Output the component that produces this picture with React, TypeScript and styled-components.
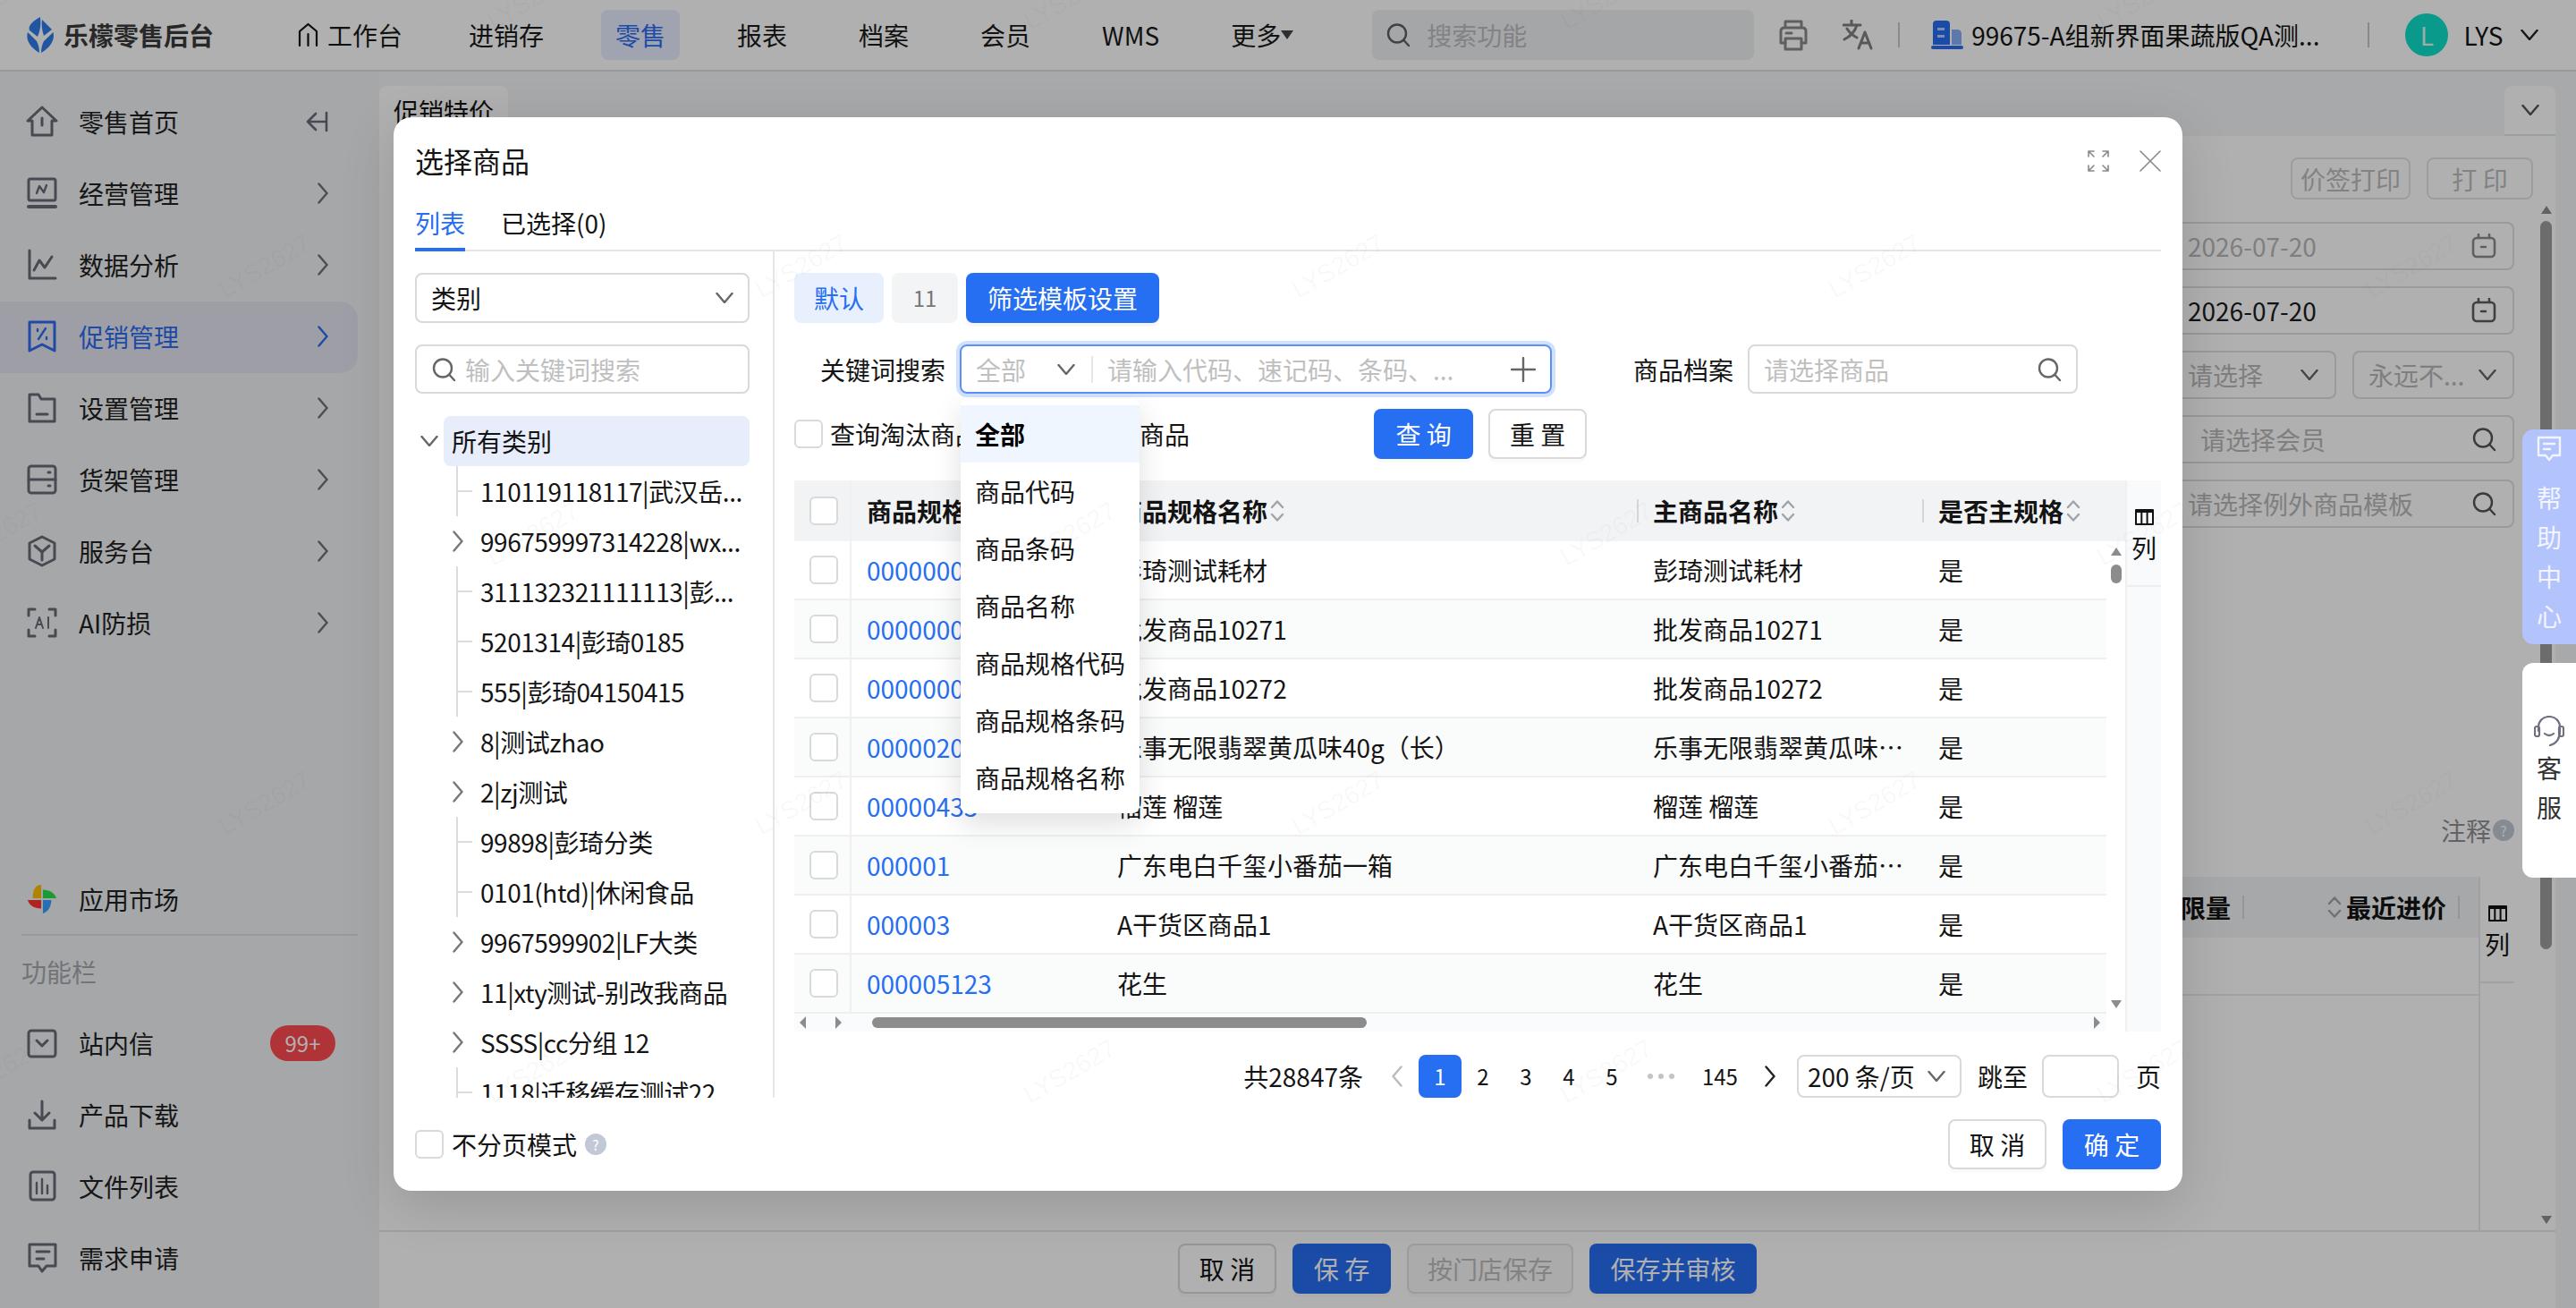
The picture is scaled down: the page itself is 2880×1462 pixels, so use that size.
import React from "react";
import styled, { createGlobalStyle, css } from "styled-components";

const FONT = `"Noto Sans CJK SC", "Noto Sans", sans-serif`;
const BLUE = "#266ef2";

const Global = createGlobalStyle`
  html, body { margin: 0; padding: 0; height: 100%; overflow: hidden; }
  body { font-family: ${FONT}; font-size: 28px; line-height: 40px; color: #141414; background: #fff; }
  * { box-sizing: border-box; }
`;

/* ---------- icons ---------- */
const Svg = styled.svg<{ $c?: string; $sw?: number }>`
  display: block;
  flex: none;
  fill: none;
  stroke: ${(p) => p.$c || "currentColor"};
  stroke-width: ${(p) => p.$sw || 3};
  stroke-linecap: round;
  stroke-linejoin: round;
`;
const ChevR = ({ c = "#666", w = 12, h = 24, sw = 2.4 }: { c?: string; w?: number; h?: number; sw?: number }) => (
  <Svg $c={c} $sw={sw} width={w} height={h} viewBox="0 0 12 24"><path d="M1.5 1.5 L10.5 12 L1.5 22.5" /></Svg>
);
const ChevL = ({ c = "#bbb" }: { c?: string }) => (
  <Svg $c={c} $sw={2.4} width={12} height={24} viewBox="0 0 12 24"><path d="M10.5 1.5 L1.5 12 L10.5 22.5" /></Svg>
);
const ChevD = ({ c = "#666" }: { c?: string }) => (
  <Svg $c={c} $sw={2.4} width={20} height={12} viewBox="0 0 20 12"><path d="M1.5 1 L10 11 L18.5 1" /></Svg>
);
const SearchIc = ({ c = "#666", s = 28 }: { c?: string; s?: number }) => (
  <Svg $c={c} $sw={2.4} width={s} height={s} viewBox="0 0 28 28"><circle cx="13" cy="12.5" r="10" /><path d="M20.5 20 L26 26" /></Svg>
);
const CalIc = ({ c = "#5c5d62" }: { c?: string }) => (
  <Svg $c={c} $sw={2.6} width={28} height={28} viewBox="0 0 28 28">
    <rect x="2" y="5" width="24" height="21" rx="4" /><path d="M8 1 V5 M20 1 V5 M11 15 H16" />
  </Svg>
);
const ColIc = () => (
  <Svg $c="#111" $sw={2} width={21} height={18} viewBox="0 0 21 18">
    <path d="M1 1 H20 V17 H1 Z M7.3 1 V17 M13.6 1 V17" /><path d="M1 2.5 H20" strokeWidth={3} />
  </Svg>
);
const Sort = () => (
  <Svg $c="#9fa3ab" $sw={2.4} width={18} height={26} viewBox="0 0 18 26"><path d="M3 9 L9 2.5 L15 9 M3 17 L9 23.5 L15 17" /></Svg>
);
const ico: Record<string, React.ReactNode> = {
  home: <path d="M18 2 L34 17 H29 V33 H7 V17 H2 Z M18 14 V22" />,
  biz: <><rect x="3" y="2" width="30" height="24" rx="2" /><path d="M3 33 H33" strokeWidth={4} /><path d="M12 18 L15 10 L20 17 L23 9" strokeWidth={2.4} /></>,
  data: <path d="M4 2 V33 H33 M9 24 L15 13 L21 21 L29 9" />,
  promo: <><path d="M4 2 H32 V34 L18 27 L4 34 Z" /><path d="M22 9 L14 21 M13 10 V12 M23 19 V21" strokeWidth={2.4} /></>,
  folder: <path d="M4 3 H14 L17 8 H32 V33 H4 Z M12 25 H24" />,
  shelf: <><rect x="3" y="3" width="30" height="30" rx="3" /><path d="M3 18 H33 M25 10 H27 M25 25 H27" /></>,
  serv: <path d="M18 2 L32 9 V27 L18 34 L4 27 V9 Z M10 12 L18 19 L26 12 M18 19 V28" />,
  ai: <><path d="M10 3 H3 V10 M26 3 H33 V10 M10 33 H3 V26 M26 33 H33 V26" /><path d="M11 24 L15 12 L19 24 M12.5 20 H17.5 M25 12 V24" strokeWidth={2} /></>,
  mail: <><rect x="3" y="4" width="30" height="29" rx="3" /><path d="M12 15 L18 21 L24 15" /></>,
  down: <path d="M18 3 V23 M10 16 L18 24 L26 16 M4 24 V33 H32 V24" />,
  file: <><rect x="5" y="2" width="27" height="31" rx="3" /><path d="M12 14 V26 M18 10 V26 M24 17 V26" strokeWidth={2.4} /></>,
  req: <path d="M4 3 H33 V27 H23 L18 33 L14 27 H4 Z M12 11 H26 M12 19 H20" />,
};
const SideIc = ({ n, c }: { n: string; c?: string }) => (
  <Svg $c={c || "#696b76"} width={36} height={36} viewBox="0 0 36 36">{ico[n]}</Svg>
);

/* ---------- top bar ---------- */
const Page = styled.div`
  position: relative;
  width: 2880px;
  height: 1462px;
  overflow: hidden;
  display: flex;
  flex-direction: column;
`;
const TopBar = styled.header`
  flex: none;
  height: 80px;
  border-bottom: 2px solid #dcdee1;
  background: #fff;
  display: flex;
  align-items: center;
  padding-left: 28px;
`;
const LogoText = styled.div`
  font-size: 28px;
  font-weight: 700;
  color: #3a3a3c;
  white-space: nowrap;
  margin-left: -1px;
`;
const Nav = styled.nav`
  display: flex;
  gap: 48px;
  margin-left: 78px;
`;
const NavItem = styled.div<{ $on?: boolean; $tight?: boolean }>`
  height: 56px;
  padding: 0 16px;
  border-radius: 8px;
  display: flex;
  align-items: center;
  white-space: nowrap;
  color: ${(p) => (p.$on ? "#2d6cf0" : "#1a1a1a")};
  background: ${(p) => (p.$on ? "#e8ecff" : "transparent")};
  ${(p) => p.$tight && css`margin-right: -6px; gap: 10px;`}
`;
const Tri = styled.i<{ $dir: "up" | "down" | "left" | "right"; $size?: number; $c?: string }>`
  display: block;
  flex: none;
  width: 0;
  height: 0;
  ${(p) => {
    const s = p.$size || 6;
    const c = p.$c || "#444";
    if (p.$dir === "up") return css`border-left: ${s}px solid transparent; border-right: ${s}px solid transparent; border-bottom: ${s * 1.5}px solid ${c};`;
    if (p.$dir === "down") return css`border-left: ${s}px solid transparent; border-right: ${s}px solid transparent; border-top: ${s * 1.5}px solid ${c};`;
    if (p.$dir === "left") return css`border-top: ${s}px solid transparent; border-bottom: ${s}px solid transparent; border-right: ${s}px solid ${c};`;
    return css`border-top: ${s}px solid transparent; border-bottom: ${s}px solid transparent; border-left: ${s}px solid ${c};`;
  }}
`;
const Spaced = styled.div<{ $ml: number }>`
  margin-left: ${(p) => p.$ml}px;
  flex: none;
  display: flex;
  align-items: center;
  white-space: nowrap;
`;
const TopSearch = styled(Spaced)`
  width: 427px;
  height: 56px;
  border-radius: 8px;
  background: #f0f1f3;
  padding-left: 15px;
  gap: 18px;
  color: #bcbec2;
`;
const VLine = styled(Spaced)`
  width: 2px;
  height: 28px;
  background: #c8c8c8;
`;
const Avatar = styled(Spaced)`
  width: 48px;
  height: 48px;
  border-radius: 50%;
  background: #0fdfca;
  color: #e6f6f4;
  justify-content: center;
`;

/* ---------- side bar ---------- */
const Body = styled.div`
  flex: 1;
  min-height: 0;
  display: flex;
`;
const Side = styled.aside`
  flex: none;
  width: 424px;
  background: #f1f2f5;
  display: flex;
  flex-direction: column;
  padding: 17px 0 15px;
`;
const SideItem = styled.div<{ $on?: boolean }>`
  height: 80px;
  width: 400px;
  padding: 0 33px 3px 29px;
  display: flex;
  align-items: center;
  gap: 23px;
  border-radius: 0 20px 20px 0;
  flex: none;
  color: ${(p) => (p.$on ? "#2d6cf0" : "#222")};
  background: ${(p) => (p.$on ? "#e5e7f1" : "transparent")};
`;
const SideText = styled.span`
  flex: 1;
  white-space: nowrap;
`;
const SideBottom = styled.div`
  margin-top: auto;
`;
const SideRule = styled.div`
  height: 2px;
  margin: -2px 24px 0;
  background: #dcdee2;
`;
const SideLabel = styled.div`
  height: 81px;
  padding: 20px 24px 0;
  color: #a6a9b0;
`;
const Badge = styled.span`
  width: 73px;
  height: 40px;
  margin-right: -8px;
  border-radius: 20px;
  background: #ff4a50;
  color: #fff;
  font-size: 24px;
  display: flex;
  align-items: center;
  justify-content: center;
`;

/* ---------- page behind the dialog ---------- */
const Main = styled.main`
  flex: 1;
  min-width: 0;
  display: flex;
  flex-direction: column;
  background: #f4f5f7;
`;
const PageTabs = styled.div`
  flex: none;
  height: 72px;
  padding: 16px 23px 0 0;
  display: flex;
  justify-content: space-between;
`;
const PageTab = styled.div`
  width: 144px;
  height: 56px;
  padding-left: 16px;
  border-radius: 8px 8px 0 0;
  background: #fff;
  white-space: nowrap;
  display: flex;
  align-items: center;
`;
const PageTabMore = styled(PageTab)`
  width: 57px;
  padding: 0;
  justify-content: center;
  border-bottom: 2px solid #e4e5e8;
`;
const Card = styled.div`
  flex: 1;
  min-height: 0;
  margin-right: 23px;
  background: #fff;
  display: flex;
  flex-direction: column;
`;
const CardBody = styled.div`
  flex: 1;
  min-height: 0;
  display: flex;
  justify-content: flex-end;
`;
const CardInner = styled.div`
  flex: none;
  width: 440px;
  margin-right: 29px;
  display: flex;
  flex-direction: column;
  align-items: stretch;
`;
const TopActions = styled.div`
  margin: 24px -21px 25px 0;
  display: flex;
  justify-content: flex-end;
  gap: 18px;
`;
const GhostBtn = styled.div<{ $w: number }>`
  width: ${(p) => p.$w}px;
  height: 47px;
  border: 2px solid #e4e4e6;
  border-radius: 8px;
  color: #bdbdbd;
  display: flex;
  align-items: center;
  justify-content: center;
  white-space: nowrap;
`;
const BgForm = styled.div`
  display: flex;
  flex-direction: column;
  gap: 18px;
`;
const BgField = styled.div<{ $w?: number; $dark?: boolean; $pl?: number }>`
  ${(p) => (p.$w ? css`width: ${p.$w}px;` : "")}
  flex: none;
  height: 54px;
  padding: 0 18px 0 ${(p) => p.$pl || 73}px;
  border: 2px solid #dfe0e2;
  border-radius: 8px;
  display: flex;
  align-items: center;
  justify-content: space-between;
  white-space: nowrap;
  overflow: hidden;
  color: ${(p) => (p.$dark ? "#1c1c1c" : "#b9b9b9")};
`;
const BgSelectRow = styled.div`
  display: flex;
  justify-content: flex-end;
  gap: 18px;
`;
const BgNoteRow = styled.div`
  margin-top: auto;
  height: 68px;
  padding-bottom: 36px;
  display: flex;
  justify-content: flex-end;
  align-items: center;
  gap: 2px;
  color: #8d9096;
`;
const Help = styled.span<{ $s: number }>`
  width: ${(p) => p.$s}px;
  height: ${(p) => p.$s}px;
  flex: none;
  border-radius: 50%;
  background: #c2c8d6;
  color: #fff;
  font-size: ${(p) => p.$s * 0.65}px;
  line-height: ${(p) => p.$s}px;
  text-align: center;
`;
const BgTable = styled.div`
  height: 395px;
  flex: none;
  display: flex;
`;
const BgGrid = styled.div`
  flex: 1;
`;
const BgHead = styled.div`
  height: 68px;
  background: #f2f3f5;
  display: grid;
  grid-template-columns: 138px 241px 21px;
  font-weight: 600;
`;
const BgHeadCell = styled.div`
  display: flex;
  align-items: center;
  justify-content: flex-end;
  padding-right: 15px;
  gap: 4px;
  position: relative;
  white-space: nowrap;
  &::after {
    content: "";
    position: absolute;
    right: 0;
    top: 21px;
    width: 2px;
    height: 26px;
    background: #d8dade;
  }
`;
const BgRow = styled.div`
  height: 65px;
  border-bottom: 2px solid #e8e9eb;
`;
const ColSetting = styled.div<{ $w: number }>`
  flex: none;
  width: ${(p) => p.$w}px;
  border-left: 2px solid #e8e9eb;
  background: #fff;
`;
const ColBtn = styled.div`
  height: 119px;
  padding-top: 32px;
  border-bottom: 2px solid #e8e9eb;
  display: flex;
  flex-direction: column;
  align-items: center;
  gap: 8px;
  line-height: 34px;
`;
const BgScroll = styled.div`
  flex: none;
  width: 13px;
  margin-right: 4px;
  padding: 78px 0 7px;
  display: flex;
  flex-direction: column;
  align-items: center;
  gap: 8px;
`;
const BgThumb = styled.div`
  flex: none;
  width: 13px;
  height: 814px;
  border-radius: 7px;
  background: #9d9d9d;
`;
const BgScrollGap = styled.div`
  flex: 1;
`;
const CardFooter = styled.div`
  flex: none;
  height: 87px;
  padding-top: 13px;
  border-top: 2px solid #e6e7e9;
  display: flex;
  justify-content: center;
  gap: 18px;
`;
const Btn = styled.div<{ $w: number; $kind?: "primary" | "default" | "ghost"; $h?: number; $ml?: number }>`
  flex: none;
  width: ${(p) => p.$w}px;
  height: ${(p) => p.$h || 56}px;
  ${(p) => p.$ml && css`margin-left: ${p.$ml}px;`}
  border-radius: 8px;
  display: flex;
  align-items: center;
  justify-content: center;
  white-space: pre;
  box-shadow: 0 4px 0 rgba(0, 0, 0, 0.02);
  ${(p) =>
    p.$kind === "primary"
      ? css`background: ${BLUE}; color: #fff;`
      : p.$kind === "ghost"
      ? css`border: 2px solid #e2e3e5; color: #bdbdbd; background: #f8f8f8;`
      : css`border: 2px solid #d9d9d9; color: #141414; background: #fff;`}
`;

/* ---------- overlays ---------- */
const Mask = styled.div`
  position: absolute;
  inset: 0;
  z-index: 10;
  background: rgba(0, 0, 0, 0.31);
`;
const FloatTab = styled.div<{ $top: number; $h: number; $help?: boolean }>`
  position: absolute;
  z-index: 30;
  right: 0;
  top: ${(p) => p.$top}px;
  width: 60px;
  height: ${(p) => p.$h}px;
  border-radius: 12px 0 0 12px;
  background: ${(p) => (p.$help ? "#b3c3fb" : "#fff")};
  color: ${(p) => (p.$help ? "#f2f4ff" : "#333")};
  display: flex;
  flex-direction: column;
  align-items: center;
  justify-content: ${(p) => (p.$help ? "flex-start" : "center")};
  padding-top: ${(p) => (p.$help ? 7 : 0)}px;
  gap: 4px;
`;
const FloatIcon = styled.div<{ $mb: number }>`
  margin-bottom: ${(p) => p.$mb}px;
`;
const Wm = styled.span`
  position: absolute;
  z-index: 40;
  pointer-events: none;
  transform: translate(-50%, -50%) rotate(-30deg);
  font-family: "Liberation Sans", sans-serif;
  font-size: 28px;
  color: rgba(60, 60, 60, 0.04);
  white-space: nowrap;
`;

/* ---------- dialog ---------- */
const Modal = styled.section`
  position: absolute;
  z-index: 20;
  left: 440px;
  top: 131px;
  width: 2000px;
  height: 1200px;
  padding: 0 24px 24px;
  background: #fff;
  border-radius: 20px;
  box-shadow: 0 16px 60px rgba(0, 0, 0, 0.14);
  display: flex;
  flex-direction: column;
`;
const ModalHead = styled.div`
  flex: none;
  height: 90px;
  padding-top: 6px;
  display: flex;
  align-items: center;
  justify-content: space-between;
`;
const ModalTitle = styled.h2`
  margin: 0;
  font-size: 32px;
  font-weight: 400;
`;
const ModalTools = styled.div`
  display: flex;
  gap: 34px;
  margin-top: 2px;
`;
const Tabs = styled.div`
  flex: none;
  height: 60px;
  padding-top: 8px;
  border-bottom: 2px solid #e6e6e6;
  display: flex;
  gap: 40px;
`;
const Tab = styled.div<{ $on?: boolean }>`
  height: 52px;
  white-space: nowrap;
  ${(p) => p.$on && css`color: ${BLUE}; border-bottom: 4px solid ${BLUE};`}
`;
const ModalMain = styled.div`
  flex: 1;
  min-height: 0;
  display: flex;
  margin-bottom: 24px;
`;
const LeftPanel = styled.div`
  flex: none;
  width: 402px;
  padding: 24px 26px 0 0;
  border-right: 2px solid #e6e6e6;
  display: flex;
  flex-direction: column;
`;
const Field = styled.div<{ $h?: number; $w?: number; $ml?: number; $mt?: number; $start?: boolean }>`
  flex: none;
  height: ${(p) => p.$h || 56}px;
  ${(p) => p.$w && css`width: ${p.$w}px;`}
  ${(p) => p.$ml && css`margin-left: ${p.$ml}px;`}
  ${(p) => p.$mt && css`margin-top: ${p.$mt}px;`}
  padding: 0 16px;
  border: 2px solid #d9d9d9;
  border-radius: 8px;
  background: #fff;
  display: flex;
  align-items: center;
  justify-content: ${(p) => (p.$start ? "flex-start" : "space-between")};
  gap: ${(p) => (p.$start ? 10 : 0)}px;
  white-space: nowrap;
`;
const Placeholder = styled.span`
  color: #bfbfbf;
`;
const TreeBox = styled.div`
  margin-top: 25px;
  flex: 1;
  min-height: 0;
  overflow: hidden;
`;
const TreeRow = styled.div<{ $leaf?: boolean }>`
  position: relative;
  height: 56px;
  padding-left: 73px;
  display: flex;
  align-items: center;
  white-space: nowrap;
  letter-spacing: -0.45px;
  ${(p) =>
    p.$leaf &&
    css`
      &::before {
        content: "";
        position: absolute;
        left: 46px;
        top: 0;
        bottom: 0;
        width: 2px;
        background: #dcdcdc;
      }
      &::after {
        content: "";
        position: absolute;
        left: 47px;
        top: 27px;
        width: 17px;
        height: 2px;
        background: #dcdcdc;
      }
    `}
`;
const TreeArrow = styled.span`
  position: absolute;
  left: 42px;
  top: 16px;
`;
const TreeRoot = styled.div`
  height: 56px;
  display: flex;
  align-items: center;
  padding-left: 6px;
`;
const TreeRootLabel = styled.div`
  flex: 1;
  height: 56px;
  margin-left: 6px;
  padding-left: 9px;
  border-radius: 8px;
  background: #e8edfb;
  display: flex;
  align-items: center;
`;
const RightPanel = styled.div`
  flex: 1;
  min-width: 0;
  padding: 24px 0 0 22px;
  display: flex;
  flex-direction: column;
`;
const TemplateRow = styled.div`
  display: flex;
  gap: 9px;
  height: 56px;
`;
const Chip = styled.div<{ $w: number; $kind: "on" | "off" | "solid" }>`
  width: ${(p) => p.$w}px;
  border-radius: 8px;
  display: flex;
  align-items: center;
  justify-content: center;
  white-space: nowrap;
  ${(p) =>
    p.$kind === "on"
      ? css`background: #e8f0fe; color: ${BLUE};`
      : p.$kind === "off"
      ? css`background: #f3f4f6; color: #777; font-size: 24px;`
      : css`background: ${BLUE}; color: #fff; box-shadow: 0 4px 0 rgba(0, 0, 0, 0.03);`}
`;
const SearchRow = styled.div`
  margin-top: 24px;
  height: 55px;
  display: flex;
  align-items: center;
  padding-left: 29px;
`;
const Label = styled.span<{ $ml?: number }>`
  flex: none;
  white-space: nowrap;
  ${(p) => p.$ml && css`margin-left: ${p.$ml}px;`}
`;
const Keyword = styled.div`
  position: relative;
  flex: none;
  width: 662px;
  height: 55px;
  margin-left: 16px;
  border: 2px solid #5b90f6;
  border-radius: 8px;
  box-shadow: 0 0 0 4px #d2e1fc;
  display: flex;
  align-items: center;
  white-space: nowrap;
`;
const KeywordScope = styled.div`
  flex: none;
  width: 147px;
  height: 30px;
  padding: 0 18px 0 16px;
  border-right: 2px solid #e6e6e6;
  display: flex;
  align-items: center;
  justify-content: space-between;
`;
const KeywordText = styled(Placeholder)`
  flex: 1;
  padding-left: 16px;
`;
const PlusWrap = styled.div`
  margin-right: 16px;
`;
const Drop = styled.div`
  position: absolute;
  z-index: 5;
  left: -1px;
  top: 59px;
  width: 200px;
  height: 463px;
  padding: 7px 0 8px;
  background: #fff;
  border-radius: 8px;
  box-shadow: 0 12px 32px rgba(0, 0, 0, 0.13);
`;
const DropItem = styled.div<{ $on?: boolean }>`
  height: 64px;
  padding-left: 16px;
  display: flex;
  align-items: center;
  ${(p) => p.$on && css`background: #f0f6ff; font-weight: 700; color: #000;`}
`;
const ActionRow = styled.div`
  margin-top: 17px;
  height: 56px;
  display: flex;
  align-items: center;
`;
const Check = styled.i<{ $ml?: number }>`
  display: block;
  flex: none;
  width: 32px;
  height: 32px;
  border: 2px solid #d9d9d9;
  border-radius: 6px;
  background: #fff;
  ${(p) => p.$ml && css`margin-left: ${p.$ml}px;`}
`;
const TableWrap = styled.div`
  margin-top: 24px;
  height: 616px;
  display: flex;
`;
const TableLeft = styled.div`
  flex: none;
  width: 1488px;
  display: flex;
  flex-direction: column;
`;
const THead = styled.div`
  flex: none;
  height: 68px;
  background: #f2f3f5;
  display: grid;
  grid-template-columns: 64px 280px 599px 319px 226px;
  font-weight: 600;
`;
const Th = styled.div<{ $sep?: boolean }>`
  position: relative;
  padding-left: 17px;
  display: flex;
  align-items: center;
  gap: 2px;
  white-space: nowrap;
  ${(p) =>
    p.$sep &&
    css`
      &::before {
        content: "";
        position: absolute;
        left: -1px;
        top: 21px;
        width: 2px;
        height: 26px;
        background: #d4d6db;
      }
    `}
`;
const CheckCell = styled.div`
  padding-left: 17px;
  display: flex;
  align-items: center;
  border-right: 2px solid #f0f0f0;
`;
const TMiddle = styled.div`
  flex: none;
  height: 528px;
  display: flex;
`;
const TRows = styled.div`
  flex: none;
  width: 1467px;
`;
const TRow = styled.div<{ $alt: boolean }>`
  height: 66px;
  display: grid;
  grid-template-columns: 64px 280px 599px 319px 205px;
  border-bottom: 2px solid #efefef;
  background: ${(p) => (p.$alt ? "#fafbfb" : "#fff")};
`;
const Td = styled.div<{ $link?: boolean }>`
  padding-left: 17px;
  display: flex;
  align-items: center;
  white-space: nowrap;
  min-width: 0;
  ${(p) => p.$link && css`color: ${BLUE};`}
`;
const Clip = styled.span`
  display: block;
  width: 290px;
  overflow: hidden;
  text-overflow: ellipsis;
`;
const VScroll = styled.div`
  flex: 1;
  display: flex;
  flex-direction: column;
  align-items: center;
  padding: 7px 0 6px;
  background: #fff;
`;
const VThumb = styled.div`
  width: 12px;
  height: 21px;
  margin-top: 10px;
  margin-bottom: auto;
  border-radius: 6px;
  background: #8c8c8c;
`;
const HScroll = styled.div`
  flex: none;
  height: 20px;
  width: 1467px;
  background: #fafbfc;
  display: flex;
  align-items: center;
  padding: 0 7px 0 6px;
`;
const HArrowGap = styled.div`
  width: 33px;
`;
const HThumb = styled.div`
  width: 553px;
  height: 12px;
  margin-left: 34px;
  margin-right: auto;
  border-radius: 6px;
  background: #8c8c8c;
`;
const ColSide = styled.div`
  flex: none;
  width: 40px;
  border-left: 2px solid #eff0f2;
  background: #f9fafc;
`;
const ColSideBtn = styled.div`
  height: 119px;
  padding-top: 32px;
  border-bottom: 2px solid #eeeeee;
  display: flex;
  flex-direction: column;
  align-items: center;
  gap: 8px;
  line-height: 34px;
`;
const Pager = styled.div`
  margin-top: 26px;
  height: 48px;
  display: flex;
  align-items: center;
  justify-content: flex-end;
  white-space: nowrap;
`;
const PagerTotal = styled.span`
  margin-right: 14px;
`;
const PageNo = styled.div<{ $on?: boolean; $w?: number; $ml?: number }>`
  flex: none;
  width: ${(p) => p.$w || 48}px;
  height: 48px;
  ${(p) => p.$ml && css`margin-left: ${p.$ml}px;`}
  border-radius: 8px;
  display: flex;
  align-items: center;
  justify-content: center;
  gap: 6px;
  font-size: 24px;
  ${(p) => p.$on && css`background: ${BLUE}; color: #fff;`}
`;
const Dot = styled.i`
  display: block;
  width: 6px;
  height: 6px;
  border-radius: 50%;
  background: #c4c4c4;
`;
const PagerField = styled.div<{ $w: number; $ml: number }>`
  flex: none;
  width: ${(p) => p.$w}px;
  height: 48px;
  margin-left: ${(p) => p.$ml}px;
  padding: 0 16px 0 10px;
  border: 2px solid #d9d9d9;
  border-radius: 8px;
  display: flex;
  align-items: center;
  justify-content: space-between;
`;
const ModalFoot = styled.div`
  flex: none;
  height: 56px;
  display: flex;
  align-items: center;
  gap: 9px;
`;
const FootSpace = styled.div`
  flex: 1;
`;

/* ---------- data ---------- */
const TREE: [string, boolean][] = [
  ["110119118117|武汉岳...", true],
  ["996759997314228|wx...", false],
  ["311132321111113|彭...", true],
  ["5201314|彭琦0185", true],
  ["555|彭琦04150415", true],
  ["8|测试zhao", false],
  ["2|zj测试", false],
  ["99898|彭琦分类", true],
  ["0101(htd)|休闲食品", true],
  ["9967599902|LF大类", false],
  ["11|xty测试-别改我商品", false],
  ["SSSS|cc分组 12", false],
  ["1118|迁移缓存测试22", true],
];
const ROWS = [
  ["00000001", "彭琦测试耗材", "彭琦测试耗材"],
  ["00000002", "批发商品10271", "批发商品10271"],
  ["00000003", "批发商品10272", "批发商品10272"],
  ["00000200", "乐事无限翡翠黄瓜味40g（长）", "乐事无限翡翠黄瓜味40g（长）"],
  ["00000433", "榴莲 榴莲", "榴莲 榴莲"],
  ["000001", "广东电白千玺小番茄一箱", "广东电白千玺小番茄一箱"],
  ["000003", "A干货区商品1", "A干货区商品1"],
  ["000005123", "花生", "花生"],
];
const SIDE_TOP: [string, string][] = [
  ["biz", "经营管理"],
  ["data", "数据分析"],
  ["promo", "促销管理"],
  ["folder", "设置管理"],
  ["shelf", "货架管理"],
  ["serv", "服务台"],
  ["ai", "AI防损"],
];
const SIDE_BOTTOM: [string, string][] = [
  ["down", "产品下载"],
  ["file", "文件列表"],
  ["req", "需求申请"],
];
const DROP = ["全部", "商品代码", "商品条码", "商品名称", "商品规格代码", "商品规格条码", "商品规格名称"];
const NAV = ["进销存", "零售", "报表", "档案", "会员", "WMS"];
const marks: { x: number; y: number }[] = [];
[-2, 298, 597, 898, 1198].forEach((y, r) => {
  for (let k = -1; k < 6; k++) marks.push({ x: (r % 2 ? 296 : 596) + 600 * k, y });
});

const LogoSvg = styled(Svg)`
  stroke: none;
  fill: #2f7dea;
`;
const PlainSvg = styled(Svg)`
  stroke: none;
`;
const BuildingSvg = styled(Svg)`
  stroke: none;
  fill: ${BLUE};
`;

export default function App() {
  return (
    <Page lang="zh-CN">
      <Global />
      <TopBar>
        <LogoSvg width={44} height={44} viewBox="8 8 44 44">
          <path d="M25 10 C15 15 11 21 13 25 L22 32 C25 25 26 18 25 10 Z" />
          <path d="M27 13 L38 24 L29 31 C27 25 26 19 27 13 Z" />
          <path d="M11 27 L21 37 C23 41 24 45 24 50 C15 45 8 36 11 27 Z" />
          <path d="M39.5 27 C42 36 35 45 26 50 C26 45 27 41 29 37 Z" />
        </LogoSvg>
        <LogoText>乐檬零售后台</LogoText>
        <Nav>
          <NavItem $tight>
            <Svg $c="#111" $sw={2.2} width={23} height={28} viewBox="0 0 23 28"><path d="M2 26 V10 L11.5 2 L21 10 V26 M11.5 13 V26" /></Svg>
            工作台
          </NavItem>
          {NAV.map((n) => (
            <NavItem key={n} $on={n === "零售"}>{n}</NavItem>
          ))}
          <NavItem>
            更多<Tri $dir="down" $size={7} $c="#444" />
          </NavItem>
        </Nav>
        <TopSearch $ml={72}>
          <SearchIc c="#5d5f63" />
          搜索功能
        </TopSearch>
        <Spaced $ml={26}>
          <Svg $c="#8a8a8a" $sw={3} width={36} height={36} viewBox="0 0 36 36">
            <path d="M9 10 V3 H27 V10 M9 27 H4 V14 Q4 10 8 10 H28 Q32 10 32 14 V27 H27 M10 16 H16" />
            <rect x="9" y="22" width="18" height="12" />
          </Svg>
        </Spaced>
        <Spaced $ml={37}>
          <Svg $c="#808080" $sw={3} width={36} height={34} viewBox="0 0 36 34">
            <path d="M1 6 H20 M10 1 V6 M16 6 C14 13 8 19 2 22 M5 10 C8 15 12 18 16 20" />
            <path d="M18 32 L25 14 L32 32 M20.5 26 H29.5" />
          </Svg>
        </Spaced>
        <VLine $ml={26} />
        <Spaced $ml={35}>
          <BuildingSvg width={36} height={34} viewBox="0 0 36 34">
            <path d="M2 5 Q2 1 6 1 H17 Q21 1 21 5 V28 H2 Z" />
            <path d="M23 11 H29 Q34 11 34 16 V28 H23 Z" opacity={0.55} />
            <rect x="0" y="29" width="36" height="4" rx="2" />
            <rect x="7" y="9" width="8" height="3" fill="#b6cffc" />
            <rect x="7" y="17" width="8" height="3" fill="#b6cffc" />
          </BuildingSvg>
        </Spaced>
        <Spaced $ml={9}>99675-A组新界面果蔬版QA测...</Spaced>
        <VLine $ml={54} />
        <Avatar $ml={40}>L</Avatar>
        <Spaced $ml={17}>LYS</Spaced>
        <Spaced $ml={20}><ChevD c="#222" /></Spaced>
      </TopBar>

      <Body>
        <Side>
          <SideItem>
            <SideIc n="home" />
            <SideText>零售首页</SideText>
            <Svg $c="#696b76" $sw={2.6} width={26} height={24} viewBox="0 0 26 24"><path d="M12 3 L3 12 L12 21 M3 12 H24 M24 2 V22" /></Svg>
          </SideItem>
          {SIDE_TOP.map(([i, t]) => {
            const on = t === "促销管理";
            return (
              <SideItem key={t} $on={on}>
                <SideIc n={i} c={on ? "#2d6cf0" : undefined} />
                <SideText>{t}</SideText>
                <ChevR c={on ? "#2d6cf0" : "#6e7078"} />
              </SideItem>
            );
          })}
          <SideBottom>
            <SideItem>
              <PlainSvg width={36} height={36} viewBox="9 10 38 38">
                <path fill="#ffc000" d="M27 28 V12 C20 12 17 18 17 28 Z" />
                <path fill="#2ce04e" d="M29 18 C37 18 43 22 45 28 H29 Z" />
                <path fill="#ff3430" d="M11 30 H27 V40 C18 40 13 36 11 30 Z" />
                <path fill="#3aa0ff" d="M29 30 H39 C39 38 35 44 29 46 Z" />
              </PlainSvg>
              <SideText>应用市场</SideText>
            </SideItem>
            <SideRule />
            <SideLabel>功能栏</SideLabel>
            <SideItem>
              <SideIc n="mail" />
              <SideText>站内信</SideText>
              <Badge>99+</Badge>
            </SideItem>
            {SIDE_BOTTOM.map(([i, t]) => (
              <SideItem key={t}>
                <SideIc n={i} />
                <SideText>{t}</SideText>
              </SideItem>
            ))}
          </SideBottom>
        </Side>

        <Main>
          <PageTabs>
            <PageTab>促销特价</PageTab>
            <PageTabMore><ChevD c="#555" /></PageTabMore>
          </PageTabs>
          <Card>
            <CardBody>
              <CardInner>
                <TopActions>
                  <GhostBtn $w={134}>价签打印</GhostBtn>
                  <GhostBtn $w={119}>打 印</GhostBtn>
                </TopActions>
                <BgForm>
                  <BgField>2026-07-20<CalIc c="#8a8b90" /></BgField>
                  <BgField $dark>2026-07-20<CalIc /></BgField>
                  <BgSelectRow>
                    <BgField $w={241}>请选择<ChevD /></BgField>
                    <BgField $w={181} $pl={16}>永远不...<ChevD /></BgField>
                  </BgSelectRow>
                  <BgField $pl={87}>请选择会员<SearchIc c="#555" /></BgField>
                  <BgField>请选择例外商品模板<SearchIc c="#555" /></BgField>
                </BgForm>
                <BgNoteRow>注释<Help $s={24}>?</Help></BgNoteRow>
                <BgTable>
                  <BgGrid>
                    <BgHead>
                      <BgHeadCell>限量</BgHeadCell>
                      <BgHeadCell><Sort />最近进价</BgHeadCell>
                    </BgHead>
                    <BgRow />
                  </BgGrid>
                  <ColSetting $w={40}>
                    <ColBtn><ColIc />列</ColBtn>
                  </ColSetting>
                </BgTable>
              </CardInner>
              <BgScroll>
                <Tri $dir="up" $size={6} $c="#8f8f8f" />
                <BgThumb />
                <BgScrollGap />
                <Tri $dir="down" $size={6} $c="#8f8f8f" />
              </BgScroll>
            </CardBody>
            <CardFooter>
              <Btn $w={110}>取 消</Btn>
              <Btn $w={110} $kind="primary">保 存</Btn>
              <Btn $w={186} $kind="ghost">按门店保存</Btn>
              <Btn $w={187} $kind="primary">保存并审核</Btn>
            </CardFooter>
          </Card>
        </Main>
      </Body>

      <Mask />

      <Modal>
        <ModalHead>
          <ModalTitle>选择商品</ModalTitle>
          <ModalTools>
            <Svg $c="#888" $sw={1.6} width={24} height={24} viewBox="0 0 24 24">
              <path d="M1 7 V1 H7 M17 1 H23 V7 M1 17 V23 H7 M17 23 H23 V17 M1 1 L7 7 M23 1 L17 7 M1 23 L7 17 M23 23 L17 17" />
            </Svg>
            <Svg $c="#888" $sw={1.6} width={24} height={24} viewBox="0 0 24 24"><path d="M1 1 L23 23 M23 1 L1 23" /></Svg>
          </ModalTools>
        </ModalHead>
        <Tabs>
          <Tab $on>列表</Tab>
          <Tab>已选择(0)</Tab>
        </Tabs>
        <ModalMain>
          <LeftPanel>
            <Field>类别<ChevD /></Field>
            <Field $h={55} $mt={24} $start>
              <SearchIc />
              <Placeholder>输入关键词搜索</Placeholder>
            </Field>
            <TreeBox>
              <TreeRoot>
                <ChevD />
                <TreeRootLabel>所有类别</TreeRootLabel>
              </TreeRoot>
              {TREE.map(([t, leaf]) => (
                <TreeRow key={t} $leaf={leaf}>
                  {!leaf && <TreeArrow><ChevR c="#777" /></TreeArrow>}
                  {t}
                </TreeRow>
              ))}
            </TreeBox>
          </LeftPanel>
          <RightPanel>
            <TemplateRow>
              <Chip $w={100} $kind="on">默认</Chip>
              <Chip $w={74} $kind="off">11</Chip>
              <Chip $w={216} $kind="solid">筛选模板设置</Chip>
            </TemplateRow>
            <SearchRow>
              <Label>关键词搜索</Label>
              <Keyword>
                <KeywordScope>
                  <Placeholder>全部</Placeholder>
                  <ChevD c="#666" />
                </KeywordScope>
                <KeywordText>请输入代码、速记码、条码、...</KeywordText>
                <PlusWrap>
                  <Svg $c="#666" $sw={2.4} width={28} height={28} viewBox="0 0 28 28">
                    <path d="M14 1 V27 M1 14 H27" />
                  </Svg>
                </PlusWrap>
                <Drop>
                  {DROP.map((d, i) => (
                    <DropItem key={d} $on={i === 0}>{d}</DropItem>
                  ))}
                </Drop>
              </Keyword>
              <Label $ml={91}>商品档案</Label>
              <Field $h={55} $w={369} $ml={16}>
                <Placeholder>请选择商品</Placeholder>
                <SearchIc />
              </Field>
            </SearchRow>
            <ActionRow>
              <Check />
              <Label $ml={8}>查询淘汰商品</Label>
              <Check $ml={26} />
              <Label $ml={8}>查询组合商品</Label>
              <Btn $w={111} $kind="primary" $ml={206}>查 询</Btn>
              <Btn $w={110} $ml={17}>重 置</Btn>
            </ActionRow>
            <TableWrap>
              <TableLeft>
                <THead>
                  <CheckCell><Check /></CheckCell>
                  <Th>商品规格代码<Sort /></Th>
                  <Th $sep>商品规格名称<Sort /></Th>
                  <Th $sep>主商品名称<Sort /></Th>
                  <Th $sep>是否主规格<Sort /></Th>
                </THead>
                <TMiddle>
                  <TRows>
                    {ROWS.map((r, i) => (
                      <TRow key={r[0]} $alt={i % 2 === 1}>
                        <CheckCell><Check /></CheckCell>
                        <Td $link>{r[0]}</Td>
                        <Td>{r[1]}</Td>
                        <Td><Clip>{r[2]}</Clip></Td>
                        <Td>是</Td>
                      </TRow>
                    ))}
                  </TRows>
                  <VScroll>
                    <Tri $dir="up" $size={6} $c="#8c8c8c" />
                    <VThumb />
                    <Tri $dir="down" $size={6} $c="#8c8c8c" />
                  </VScroll>
                </TMiddle>
                <HScroll>
                  <Tri $dir="left" $size={7} $c="#8c8c8c" />
                  <HArrowGap />
                  <Tri $dir="right" $size={7} $c="#8c8c8c" />
                  <HThumb />
                  <Tri $dir="right" $size={7} $c="#8c8c8c" />
                </HScroll>
              </TableLeft>
              <ColSide>
                <ColSideBtn><ColIc />列</ColSideBtn>
              </ColSide>
            </TableWrap>
            <Pager>
              <PagerTotal>共28847条</PagerTotal>
              <PageNo><ChevL /></PageNo>
              <PageNo $on>1</PageNo>
              {[2, 3, 4, 5].map((n) => <PageNo key={n}>{n}</PageNo>)}
              <PageNo $w={62}><Dot /><Dot /><Dot /></PageNo>
              <PageNo $ml={11}>145</PageNo>
              <PageNo $ml={8}><ChevR c="#222" /></PageNo>
              <PagerField $w={184} $ml={6}>200 条/页<ChevD /></PagerField>
              <Label $ml={18}>跳至</Label>
              <PagerField $w={86} $ml={16} />
              <Label $ml={19}>页</Label>
            </Pager>
          </RightPanel>
        </ModalMain>
        <ModalFoot>
          <Check />
          <Label>不分页模式</Label>
          <Help $s={24}>?</Help>
          <FootSpace />
          <Btn $w={110}>取 消</Btn>
          <Btn $w={110} $kind="primary" $ml={9}>确 定</Btn>
        </ModalFoot>
      </Modal>

      <FloatTab $top={480} $h={240} $help>
        <FloatIcon $mb={17}>
          <Svg $c="#f2f4ff" $sw={2.4} width={28} height={28} viewBox="0 0 28 28">
            <path d="M2 2 H26 V22 H18 L14 27 L10 22 H2 Z M8 9 H20 M8 15 H15" />
          </Svg>
        </FloatIcon>
        <span>帮</span><span>助</span><span>中</span><span>心</span>
      </FloatTab>
      <FloatTab $top={741} $h={240}>
        <Svg $c="#6f7180" $sw={2.2} width={34} height={34} viewBox="0 0 34 34">
          <path d="M5 17 V13 C5 6 10 1 17 1 C24 1 29 6 29 13 V17 C29 25 25 31 18 33" />
          <rect x="1" y="12" width="5" height="11" rx="2" /><rect x="28" y="12" width="5" height="11" rx="2" />
          <path d="M12 20 Q17 24 22 20" />
        </Svg>
        <span>客</span><span>服</span>
      </FloatTab>

      {marks.map((m) => (
        <Wm key={`${m.x}-${m.y}`} style={{ left: m.x, top: m.y }}>LYS2627</Wm>
      ))}
    </Page>
  );
}
